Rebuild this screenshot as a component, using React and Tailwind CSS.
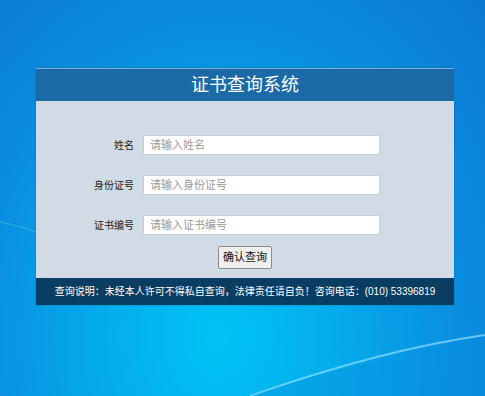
import React from 'react';

const fields = [
  { label: '姓名', placeholder: '请输入姓名' },
  { label: '身份证号', placeholder: '请输入身份证号' },
  { label: '证书编号', placeholder: '请输入证书编号' },
];

const App = () => (
  <div className="relative h-[396px] w-full overflow-hidden bg-[radial-gradient(ellipse_at_45%_85%,#00c4f4_0%,#05a8ea_35%,#0a8ddf_65%,#0b78d2_100%)] pt-[68px] font-['Liberation_Sans','Noto_Sans_CJK_SC',sans-serif]">
    {/* desktop wallpaper swoosh */}
    <svg className="absolute inset-0 h-full w-full" viewBox="0 0 485 396" preserveAspectRatio="none">
      <path d="M0 222 Q30 228 45 236" stroke="#5ccaf5" strokeOpacity="0.35" strokeWidth="1.5" fill="none" />
      <path d="M250 396 Q380 350 485 335" stroke="#8fe0ff" strokeOpacity="0.7" strokeWidth="2" fill="none" />
      <path d="M250 396 Q380 354 485 340 L485 396 Z" fill="#0a8ee0" fillOpacity="0.35" />
    </svg>
    <div className="relative ml-[36px] w-[418px] shadow-[0_0_2px_rgba(0,0,0,0.2)]">
      <div className="flex h-[33px] items-center justify-center border-t border-[#7fb0d6] bg-[#1b6aa6] text-[18px] text-white">
        证书查询系统
      </div>
      <div className="flex h-[177px] flex-col bg-[#d1dbe5] pt-[34px]">
        {fields.map((f) => (
          <div key={f.label} className="mb-[20px] flex h-[20px] items-center">
            <div className="w-[107px] pr-[9px] text-right text-[10px] text-[#222]">{f.label}</div>
            <input
              placeholder={f.placeholder}
              className="h-[20px] w-[237px] border border-[#c4ccd4] bg-white px-[6px] text-[11px] text-[#333] placeholder:text-[#9a9a9a] outline-none"
            />
          </div>
        ))}
        <div className="-mt-[9px] flex justify-center">
          <button className="h-[23px] w-[54px] rounded-[2px] border border-[#8a8a8a] bg-[#efefef] text-[11px] text-[#111]">
            确认查询
          </button>
        </div>
      </div>
      <div className="flex h-[27px] items-center justify-center whitespace-nowrap bg-[#0a3d62] text-[10px] text-white">
        查询说明：未经本人许可不得私自查询，法律责任请自负！咨询电话：(010) 53396819
      </div>
    </div>
  </div>
);

export default App;
